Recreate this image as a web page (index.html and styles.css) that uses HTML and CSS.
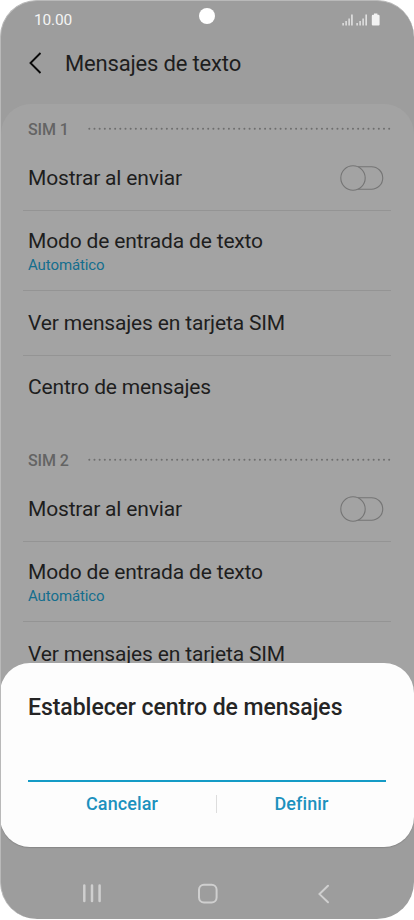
FILE: index.html
```html
<!DOCTYPE html>
<html lang="es">
<head>
<meta charset="utf-8">
<title>Mensajes de texto</title>
<link rel="stylesheet" href="styles.css">
</head>
<body>
<div class="phone">
  <header class="status">
    <span class="time">10.00</span>
    <span class="camera"></span>
    <svg class="indicators" width="38" height="14" viewBox="0 0 38 14" fill="#f2f2f2">
      <path d="M.5 10h1.200v2.500H.5zM3.500 8h1.200v4.500H3.500zM6.500 5.500h1.200v7H6.500zM9.300 1.500h1.300v11H9.300zM14.500 10h1.200v2.500h-1.200zM17.500 8h1.200v4.500h-1.200zM20.500 5.500h1.200v7h-1.200zM23.500 1.500h1.300v11h-1.300z"/>
      <path d="M32 .5h3.400v1.200h1q1.200 0 1.200 1.200v8.500q0 1.100-1.100 1.100h-5.600q-1.100 0-1.100-1.100V2.900q0-1.200 1.200-1.200h1z"/>
    </svg>
  </header>
  <div class="titlebar">
    <svg class="back" width="13" height="22" viewBox="0 0 13 22"><path d="M11.500 1 1.500 11l10 10" fill="none" stroke="#0a0a0a" stroke-width="1.900"/></svg>
    <h1 class="title">Mensajes de texto</h1>
  </div>
  <main class="panel">
    <section class="group">
      <div class="sim"><span class="sim-name">SIM 1</span><svg class="dots" width="304" height="4"><path d="M2.300 1.800H304" stroke="#6e6e6e" stroke-width="2" stroke-linecap="round" stroke-dasharray=".01 5.160"/></svg></div>
      <div class="row"><span class="label">Mostrar al enviar</span><svg class="switch" width="44" height="26" viewBox="0 0 44 26" fill="none" stroke="#757575" stroke-width="1.100"><path d="M18 1.700h13.500a11.200 11.200 0 0 1 0 22.500H18"/><circle class="knob" cx="13" cy="13" r="12.200"/></svg></div>
      <div class="row tall"><span class="label">Modo de entrada de texto</span><span class="value">Automático</span></div>
      <div class="row"><span class="label">Ver mensajes en tarjeta SIM</span></div>
      <div class="row last"><span class="label">Centro de mensajes</span></div>
    </section>
    <section class="group">
      <div class="sim"><span class="sim-name">SIM 2</span><svg class="dots" width="304" height="4"><path d="M2.300 1.800H304" stroke="#6e6e6e" stroke-width="2" stroke-linecap="round" stroke-dasharray=".01 5.160"/></svg></div>
      <div class="row"><span class="label">Mostrar al enviar</span><svg class="switch" width="44" height="26" viewBox="0 0 44 26" fill="none" stroke="#757575" stroke-width="1.100"><path d="M18 1.700h13.500a11.200 11.200 0 0 1 0 22.500H18"/><circle class="knob" cx="13" cy="13" r="12.200"/></svg></div>
      <div class="row tall"><span class="label">Modo de entrada de texto</span><span class="value">Automático</span></div>
      <div class="row hidden-line"><span class="label">Ver mensajes en tarjeta SIM</span></div>
    </section>
  </main>
  <div class="dialog" role="dialog">
    <h2 class="dialog-title">Establecer centro de mensajes</h2>
    <div class="field"></div>
    <div class="actions"><span class="action">Cancelar</span><i class="divider"></i><span class="action">Definir</span></div>
  </div>
  <nav class="nav">
    <svg width="414" height="24" viewBox="0 0 414 24" fill="none" stroke="#cfcfcf" stroke-width="2" stroke-linecap="round">
      <path d="M84.300 4.500v15.500M92 4.500v15.500M99.600 4.500v15.500" stroke-width="2.500"/>
      <rect x="199" y="3.800" width="17.600" height="17.600" rx="5"/>
      <path d="m328 4.800-8.500 8.300 8.500 8.200"/>
    </svg>
  </nav>
</div>
</body>
</html>
```
FILE: styles.css
```css
* { box-sizing: border-box; }
body { margin: 0; width: 414px; height: 920px; overflow: hidden; background: #fff; font-family: Roboto, sans-serif; }
.phone { position: relative; width: 414px; height: 919px; overflow: hidden; border-radius: 37px; border-left: 1px solid #b9b9b9; border-top: 1px solid #b9b9b9; background: #9d9d9d; display: flex; flex-direction: column; }
.status { height: 38px; display: grid; grid-template-columns: 1fr 16px 1fr; align-items: center; padding: 0 34px 0 33px; }
.time { color: #f4f4f4; font-size: 15.500px; line-height: 20px; letter-spacing: -.15px; }
.camera { width: 16px; height: 16px; border-radius: 50%; background: #fff; margin-top: -8px; }
.indicators { justify-self: end; }
.titlebar { height: 65px; padding: 0 28px; display: flex; align-items: flex-start; }
.back { margin-top: 13px; }
.title { margin: 12px 0 0 23px; font-size: 22px; line-height: 26px; font-weight: 400; letter-spacing: -.17px; color: #1e1e1e; white-space: nowrap; }
.panel { height: 600px; flex: none; overflow: hidden; border-radius: 30px 30px 0 0; background: #a3a3a3; }
.group { height: 331px; padding: 0 23px 0 22px; }
.sim { height: 42px; padding: 16px 0 0 5px; display: flex; }
.sim-name { width: 59px; font-size: 16px; line-height: 20px; font-weight: 500; letter-spacing: -.1px; color: #646464; white-space: nowrap; }
.dots { margin-top: 7px; flex: none; }
.row { height: 65px; padding: 0 7px 0 5px; border-bottom: 1px solid #949494; display: flex; align-items: center; justify-content: space-between; }
.tall { height: 80px; flex-direction: column; align-items: flex-start; justify-content: flex-start; padding-top: 16px; }
.last { height: 61px; border: 0; }
.hidden-line { border-color: transparent; }
.switch { margin-top: -1px; }
.knob { fill: #a3a3a3; }
.label { font-size: 21px; line-height: 28px; letter-spacing: -.17px; color: #1e1e1e; white-space: nowrap; }
.value { font-size: 15px; line-height: 20px; letter-spacing: -.1px; color: #146e8e; }
.dialog { height: 184px; flex: none; margin: -41px 0 0 -1px; border-radius: 30px; background: #fdfdfd; padding: 31px 28px 0; box-shadow: 0 1px 1px #888; position: relative; }
.dialog-title { margin: 0; font-size: 23px; line-height: 28px; font-weight: 500; letter-spacing: -.05px; color: #252525; white-space: nowrap; }
.field { height: 60px; border-bottom: 2px solid #159bc6; }
.actions { height: 43px; display: grid; grid-template-columns: 188px 1px 169px; align-items: center; }
.action { text-align: center; font-size: 18px; line-height: 24px; font-weight: 500; letter-spacing: .1px; color: #1c91be; }
.divider { width: 1px; height: 18px; background: #ddd; }
.nav { margin: 34px 0 0 -1px; height: 24px; }
.nav svg { display: block; }
```
